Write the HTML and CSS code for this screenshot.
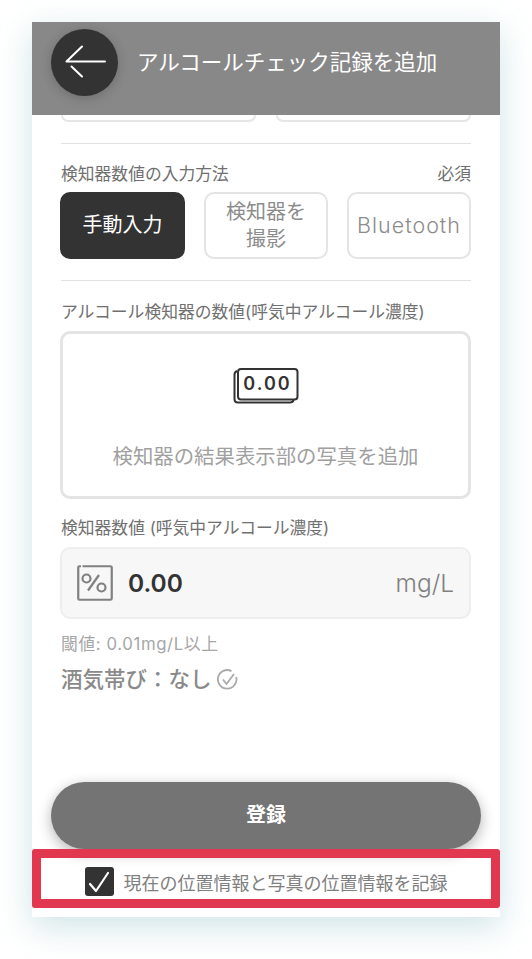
FILE: index.html
```html
<!DOCTYPE html>
<html lang="ja">
  <head>
    <meta charset="UTF-8" />
    <meta name="viewport" content="width=device-width, initial-scale=1.0" />
    <title>アルコールチェック記録を追加</title>
    <link rel="stylesheet" href="styles.css">
  </head>
  <body>
    <div class="phone">
      <div class="header">
        <div class="back-btn">
          <svg width="67" height="67" viewBox="0 0 67 67" fill="none" stroke="#fff" stroke-width="2" stroke-linecap="round" stroke-linejoin="round">
            <path d="M54 32.500H15.500L31 17.500M20.500 37.500 31 47.500" />
          </svg>
        </div>
        <div class="header-title">アルコールチェック記録を追加</div>
      </div>

      <div class="content">
        <div class="cut-row">
          <div class="cut-box"></div>
          <div class="cut-box"></div>
        </div>
        <hr class="divider divider-top" />

        <div class="label-row">
          <span>検知器数値の入力方法</span>
          <span>必須</span>
        </div>
        <div class="method-row">
          <div class="method active">手動入力</div>
          <div class="method">検知器を<br />撮影</div>
          <div class="method method-latin">Bluetooth</div>
        </div>
        <hr class="divider divider-mid" />

        <div class="label label-photo">アルコール検知器の数値(呼気中アルコール濃度)</div>
        <div class="photo-box">
          <div class="meter-icon">
            <svg width="66" height="36" viewBox="0 0 66 36" fill="none" stroke="#333">
              <path d="M4 3C2.500 3.500 1.500 4.500 1.500 6.500v24.500c0 2.200 1.300 3.500 3.500 3.500h52c2 0 3.200-1 3.500-2.500" stroke-width="2" />
              <rect x="5" y="1" width="59.500" height="30.500" rx="3" fill="#fff" stroke-width="2" />
            </svg>
            <span class="meter-text">0.00</span>
          </div>
          <div class="photo-text">検知器の結果表示部の写真を追加</div>
        </div>

        <div class="label label-value">検知器数値 (呼気中アルコール濃度)</div>
        <div class="value-box">
          <svg class="percent-icon" width="36" height="36" viewBox="0 0 36 36" fill="none" stroke="#808080" stroke-width="2.200">
            <path d="M4 1.250H2.500Q1.250 1.250 1.250 2.500v31q0 1.250 1.250 1.250h31q1.250 0 1.250-1.250v-31q0-1.250-1.250-1.250H5.500" />
            <circle cx="9.500" cy="13.500" r="4" />
            <circle cx="24.500" cy="22.500" r="4" />
            <path d="M22 10 11 25.500" />
          </svg>
          <span class="value">0.00</span>
          <span class="unit">mg/L</span>
        </div>
        <div class="threshold">閾値: 0.01mg/L以上</div>
        <div class="result">
          <span>酒気帯び：なし</span>
          <svg width="21" height="21" viewBox="0 0 21 21" fill="none" stroke="#aaa" stroke-width="1.800">
            <path d="M19.200 8A9.300 9.300 0 1 1 14.500 2.100" />
            <path d="M6 10.500l3.500 4.500L17 5" />
          </svg>
        </div>
      </div>

      <div class="submit-wrap">
        <div class="submit-btn">登録</div>
      </div>
      <div class="location-row">
        <div class="checkbox">
          <svg width="22" height="22" viewBox="0 0 22 22" fill="none" stroke="#fff" stroke-width="2.200" stroke-linecap="round" stroke-linejoin="round">
            <path d="M2 13 8 20 20 2" />
          </svg>
        </div>
        <span>現在の位置情報と写真の位置情報を記録</span>
      </div>
    </div>
  </body>
</html>
```

FILE: styles.css
```css
* {
  box-sizing: border-box;
}

html,
body {
  height: 959px;
  overflow: hidden;
}

body {
  margin: 0;
  padding: 22px 32px 0;
  background-color: #fff;
  font-family: Inter, "Noto Sans CJK JP", sans-serif;
  color: #707070;
}

.phone {
  width: 468px;
  height: 895px;
  background-color: #fff;
  box-shadow: 0 10px 32px rgba(110, 170, 180, 0.32);
  display: flex;
  flex-direction: column;
}

.header {
  height: 93px;
  background-color: #888;
  padding: 7px 19px 0;
  display: flex;
  align-items: flex-start;
  gap: 19px;
  flex-shrink: 0;
}

.back-btn {
  width: 67px;
  height: 67px;
  border-radius: 50%;
  background-color: #333;
  box-shadow: 0 2px 12px rgba(0, 0, 0, 0.2);
  flex-shrink: 0;
}

.back-btn svg {
  display: block;
}

.header-title {
  color: #fff;
  font-size: 21.500px;
  line-height: 67px;
  white-space: nowrap;
}

.content {
  padding: 0 29px;
  flex-grow: 1;
}

.cut-row {
  display: grid;
  grid-template-columns: 195px 195px;
  justify-content: space-between;
}

.cut-box {
  height: 7px;
  border: 2px solid #e6e6e6;
  border-top: none;
  border-radius: 0 0 10px 10px;
}

.divider {
  border: none;
  border-top: 1px solid #e2e2e2;
  margin: 0;
}

.divider-top {
  margin-top: 21px;
}

.divider-mid {
  margin-top: 21px;
}

.label-row {
  display: flex;
  justify-content: space-between;
  font-size: 16.800px;
  line-height: 22px;
  margin-top: 19px;
}

.method-row {
  display: grid;
  grid-template-columns: 125px 124px 124px;
  justify-content: space-between;
  margin: 7px 0 0 -1px;
}

.method {
  height: 67px;
  border: 2px solid #e4e4e4;
  border-radius: 10px;
  color: #8c8c8c;
  font-size: 20px;
  line-height: 27px;
  text-align: center;
  display: flex;
  align-items: center;
  justify-content: center;
}

.method.active {
  background-color: #333;
  border-color: #333;
  color: #fff;
}

.method-latin {
  font-size: 21.500px;
  font-weight: 300;
  letter-spacing: 1px;
  white-space: nowrap;
}

.label {
  font-size: 16.800px;
  line-height: 22px;
  white-space: nowrap;
}

.label-photo {
  margin-top: 20px;
}

.photo-box {
  height: 168px;
  margin: 8px 0 0 -1px;
  border: 3px solid #e4e4e4;
  border-radius: 10px;
  display: flex;
  flex-direction: column;
  align-items: center;
}

.meter-icon {
  position: relative;
  width: 66px;
  height: 36px;
  margin-top: 34px;
}

.meter-text {
  position: absolute;
  top: 0;
  left: 5px;
  width: 60px;
  text-align: center;
  font-size: 18px;
  font-weight: 600;
  line-height: 32px;
  letter-spacing: 2px;
  color: #333;
}

.photo-text {
  margin-top: 39px;
  font-size: 20.400px;
  line-height: 28px;
  color: #a0a0a0;
}

.label-value {
  margin-top: 18px;
}

.value-box {
  height: 72px;
  margin: 8px 0 0 -1px;
  padding: 0 15px;
  background-color: #f7f7f7;
  border: 2px solid #eee;
  border-radius: 10px;
  display: flex;
  align-items: center;
}

.percent-icon {
  flex-shrink: 0;
}

.value {
  margin-left: 15px;
  font-size: 24.500px;
  font-weight: 600;
  color: #333;
}

.unit {
  margin-left: auto;
  font-size: 24.500px;
  font-weight: 300;
  color: #808080;
}

.threshold {
  margin-top: 14px;
  font-size: 16.800px;
  line-height: 22px;
  letter-spacing: 0.600px;
  color: #a6a6a6;
}

.result {
  margin-top: 10px;
  display: flex;
  align-items: center;
  gap: 5px;
  font-size: 21.500px;
  font-weight: 500;
  line-height: 28px;
  color: #8a8a8a;
}

.submit-wrap {
  padding: 0 19px;
  flex-shrink: 0;
}

.submit-btn {
  height: 67px;
  border-radius: 34px;
  background-color: #747474;
  box-shadow: 0 4px 14px rgba(0, 0, 0, 0.3);
  color: #fff;
  font-size: 20px;
  font-weight: 700;
  line-height: 67px;
  text-align: center;
}

.location-row {
  height: 59px;
  margin-bottom: 9px;
  padding-top: 6px;
  border: 9px solid #e1374f;
  border-radius: 3px;
  display: flex;
  align-items: center;
  justify-content: center;
  gap: 10px;
  font-size: 18px;
  color: #808080;
  flex-shrink: 0;
}

.checkbox {
  width: 29px;
  height: 29px;
  border-radius: 3px;
  background-color: #333;
  display: flex;
  align-items: center;
  justify-content: center;
}
```
